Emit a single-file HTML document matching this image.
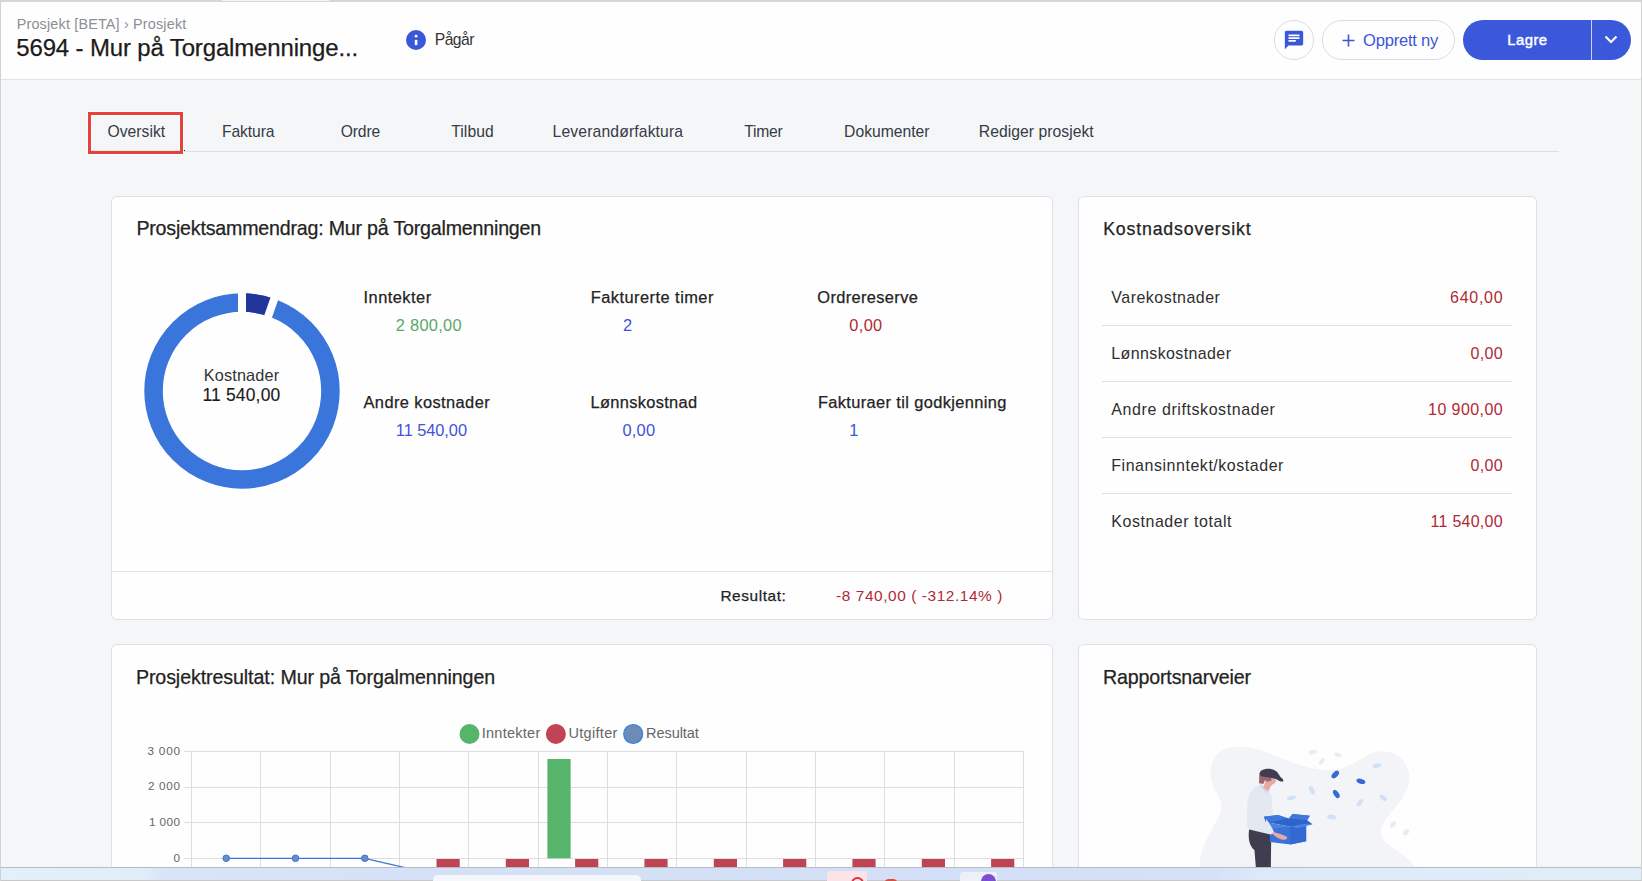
<!DOCTYPE html>
<html><head><meta charset="utf-8">
<style>
*{box-sizing:border-box;margin:0;padding:0}
html,body{width:1642px;height:881px;overflow:hidden}
body{position:relative;background:#f5f6f8;font-family:"Liberation Sans",sans-serif}
.abs{position:absolute}
.bl{display:inline-block;width:0;height:0;vertical-align:baseline}
.t{position:absolute;white-space:nowrap;font-family:"Liberation Sans",sans-serif}
#frameL{left:0;top:0;width:1px;height:881px;background:#d2d2d2}
#frameR{left:1641px;top:0;width:1px;height:881px;background:#d2d2d2}
#frameT{left:0;top:0;width:1642px;height:2px;background:#d6d6d8}
#header{left:1px;top:2px;width:1640px;height:77px;background:#fefefe}
#hborder{left:1px;top:79px;width:1640px;height:1px;background:#dde1e8}
.card{position:absolute;background:#fefefe;border:1px solid #dce1ea;border-radius:6px}
#tabline{left:88px;top:151px;width:1471px;height:1px;background:#dbe0e7}
#tabsel{left:91px;top:150px;width:94px;height:1px;background:#1b2a55}
#redbox{left:88px;top:112px;width:95px;height:42px;border:3px solid #e4423b;box-shadow:0 0 0 1px rgba(250,255,255,0.9),inset 0 0 0 1px rgba(250,255,255,0.9)}
.btn-round{position:absolute;border:1px solid #d8dee8;border-radius:20px;background:#fefefe}
#lagre{left:1463px;top:20px;width:168px;height:40px;background:#3b58db;border-radius:20px}
#lagrediv{left:1591px;top:20px;width:1px;height:40px;background:#c9d3f5}
.divider{position:absolute;left:1102px;width:410px;height:1px;background:#dde1e8}
#taskbar{left:0;top:867px;width:1642px;height:14px;background:linear-gradient(90deg,#e3f0fa 0%,#e1eefa 8.5%,#d8e5f8 10%,#d5e1f6 25%,#d3dff6 60%,#d5e1f6 74%,#dde9f8 76.5%,#e1eef9 100%);border-top:1px solid #b9bcc2;border-bottom:1px solid #c8c8c8}
</style></head><body>
<div class="abs" id="header"></div>
<div class="abs" id="hborder"></div>
<div class="abs" id="frameT"></div>
<div class="abs" style="left:222px;top:0;width:107px;height:1px;background:#f4f4f4"></div>

<!-- info icon -->
<svg class="abs" style="left:406px;top:30px" width="20" height="20" viewBox="0 0 20 20"><circle cx="10" cy="10" r="10" fill="#3b57d9"/><rect x="8.8" y="9.9" width="2.6" height="5.2" fill="#fff"/><rect x="8.8" y="4.9" width="2.6" height="2.4" fill="#fff"/></svg>

<!-- chat button -->
<div class="btn-round" style="left:1274px;top:20px;width:40px;height:40px;"></div>
<svg class="abs" style="left:1283px;top:29px" width="22" height="22" viewBox="0 0 24 24"><path fill="#3b57d9" d="M20 2H4c-1.1 0-1.99.9-1.99 2L2 22l4-4h14c1.1 0 2-.9 2-2V4c0-1.1-.9-2-2-2zM6 9h12v2H6V9zm8 5H6v-2h8v2zm4-6H6V6h12v2z"/></svg>

<!-- opprett ny -->
<div class="btn-round" style="left:1322px;top:20px;width:133px;height:40px;"></div>
<svg class="abs" style="left:1342px;top:33.5px" width="13" height="13" viewBox="0 0 13 13"><path d="M6.5 0.5v12M0.5 6.5h12" stroke="#3b57d9" stroke-width="1.6"/></svg>

<!-- lagre -->
<div class="abs" id="lagre"></div>
<div class="abs" id="lagrediv"></div>
<svg class="abs" style="left:1603px;top:34px" width="16" height="12" viewBox="0 0 16 12"><path d="M2.5 2.5l5.5 5.5l5.5-5.5" stroke="#fff" stroke-width="2.2" fill="none"/></svg>

<!-- tabs -->
<div class="abs" id="tabline"></div>
<div class="abs" id="tabsel"></div>

<!-- cards -->
<div class="card" style="left:111px;top:196px;width:942px;height:424px"></div>
<div class="abs" style="left:112px;top:571px;width:940px;height:1px;background:#dfe3ea"></div>
<div class="card" style="left:1078px;top:196px;width:459px;height:424px"></div>
<div class="card" style="left:111px;top:644px;width:942px;height:260px"></div>
<div class="card" style="left:1078px;top:644px;width:459px;height:260px"></div>

<div class="divider" style="top:325px"></div>
<div class="divider" style="top:381px"></div>
<div class="divider" style="top:437px"></div>
<div class="divider" style="top:493px"></div>

<!-- donut -->
<svg class="abs" style="left:141.65px;top:291.1px" width="200" height="200" viewBox="0 0 200 200">
<circle cx="100" cy="100" r="88.45" fill="none" stroke="#3a75dc" stroke-width="18.5"/>
<path d="M100 11.55 A88.45 88.45 0 0 1 129.23 16.52" fill="none" stroke="#23349c" stroke-width="18.5"/>
<path d="M96 0 H104 V40 H96 Z" fill="#fefefe"/>
<g transform="rotate(19.3 100 100)"><path d="M96 0 H104 V40 H96 Z" fill="#fefefe"/></g>
</svg>

<svg class="abs" style="left:0;top:0" width="1642" height="881" viewBox="0 0 1642 881">
<g stroke="#dedede" stroke-width="1" shape-rendering="crispEdges"><line x1="191.5" y1="751" x2="191.5" y2="881" /><line x1="260.8" y1="751" x2="260.8" y2="881" /><line x1="330.2" y1="751" x2="330.2" y2="881" /><line x1="399.5" y1="751" x2="399.5" y2="881" /><line x1="468.8" y1="751" x2="468.8" y2="881" /><line x1="538.1" y1="751" x2="538.1" y2="881" /><line x1="607.5" y1="751" x2="607.5" y2="881" /><line x1="676.8" y1="751" x2="676.8" y2="881" /><line x1="746.1" y1="751" x2="746.1" y2="881" /><line x1="815.5" y1="751" x2="815.5" y2="881" /><line x1="884.8" y1="751" x2="884.8" y2="881" /><line x1="954.1" y1="751" x2="954.1" y2="881" /><line x1="1023.5" y1="751" x2="1023.5" y2="881" /><line x1="184" y1="751.4" x2="1023.5" y2="751.4" /><line x1="184" y1="787.0" x2="1023.5" y2="787.0" /><line x1="184" y1="822.7" x2="1023.5" y2="822.7" /><line x1="184" y1="858.3" x2="1023.5" y2="858.3" /></g>
<rect x="436.5" y="859" width="23.2" height="30" fill="#bf4453"/><rect x="505.8" y="859" width="23.2" height="30" fill="#bf4453"/><rect x="575.1" y="859" width="23.2" height="30" fill="#bf4453"/><rect x="644.4" y="859" width="23.2" height="30" fill="#bf4453"/><rect x="713.8" y="859" width="23.2" height="30" fill="#bf4453"/><rect x="783.1" y="859" width="23.2" height="30" fill="#bf4453"/><rect x="852.4" y="859" width="23.2" height="30" fill="#bf4453"/><rect x="921.8" y="859" width="23.2" height="30" fill="#bf4453"/><rect x="991.1" y="859" width="23.2" height="30" fill="#bf4453"/><rect x="547.4" y="759" width="23.2" height="99.3" fill="#57b46b"/><polyline points="226.2,858.3 364.8,858.3 434.2,874.4" fill="none" stroke="#3d76da" stroke-width="1.3"/><circle cx="226.2" cy="858.3" r="3.3" fill="#6b8cc0" stroke="#3d76da" stroke-width="1"/><circle cx="295.5" cy="858.3" r="3.3" fill="#6b8cc0" stroke="#3d76da" stroke-width="1"/><circle cx="364.8" cy="858.3" r="3.3" fill="#6b8cc0" stroke="#3d76da" stroke-width="1"/>
<circle cx="469.5" cy="734" r="10" fill="#57b46b"/>
<circle cx="555.9" cy="734" r="10" fill="#c04455"/>
<circle cx="633.2" cy="734" r="9.5" fill="#6b8cb8" stroke="#3d7ee0" stroke-width="1.2"/>
</svg>

<!-- illustration -->
<svg class="abs" style="left:1190px;top:735px" width="240" height="135" viewBox="0 0 1566 881">
<path d="M60 881 C 60 760 120 650 175 560 C 230 470 200 420 160 350 C 110 260 130 150 210 100 C 290 60 390 70 520 120 C 650 170 780 230 900 230 C 1000 230 1080 180 1160 130 C 1260 80 1380 110 1420 220 C 1460 330 1380 430 1300 520 C 1220 610 1230 680 1330 740 C 1410 790 1460 830 1470 881 Z" fill="#f3f4f7"/>
<g fill="#eaecf1">
<ellipse cx="800" cy="112" rx="28" ry="14" transform="rotate(-15 800 112)"/>
<ellipse cx="965" cy="130" rx="25" ry="13" transform="rotate(20 965 130)"/>
<ellipse cx="860" cy="172" rx="14" ry="26" transform="rotate(35 860 172)"/>
<ellipse cx="1325" cy="585" rx="16" ry="24" transform="rotate(40 1325 585)"/>
<ellipse cx="1410" cy="635" rx="16" ry="24" transform="rotate(45 1410 635)"/>
</g>
<g fill="#d0e0f7">
<ellipse cx="1220" cy="200" rx="30" ry="15" transform="rotate(-10 1220 200)"/>
<ellipse cx="795" cy="360" rx="15" ry="30" transform="rotate(-30 795 360)"/>
<ellipse cx="662" cy="410" rx="30" ry="14" transform="rotate(-10 662 410)"/>
<ellipse cx="1260" cy="410" rx="15" ry="28" transform="rotate(-50 1260 410)"/>
<ellipse cx="1108" cy="442" rx="14" ry="28" transform="rotate(35 1108 442)"/>
<ellipse cx="925" cy="535" rx="30" ry="15" transform="rotate(10 925 535)"/>
</g>
<g fill="#3569d4">
<ellipse cx="948" cy="258" rx="17" ry="30" transform="rotate(45 948 258)"/>
<ellipse cx="1115" cy="302" rx="30" ry="16" transform="rotate(15 1115 302)"/>
<ellipse cx="955" cy="385" rx="16" ry="30" transform="rotate(-35 955 385)"/>
</g>
<!-- person -->
</svg>
<svg class="abs" style="left:1240px;top:760px" width="80" height="108" viewBox="0 0 653 881">
<path d="M75 560 L255 585 L252 881 L130 881 L118 735 C82 705 62 650 75 560 Z" fill="#3f3d4f"/>
<path d="M68 305 C85 250 130 215 172 198 L232 248 L258 295 L268 450 L262 560 L278 598 L240 605 L75 568 L58 545 C52 450 55 360 68 305 Z" fill="#e3e8f1"/>
<path d="M172 198 L232 248 L225 275 L160 215 Z" fill="#d3d9e6"/>
<path d="M198 130 L292 148 C298 172 290 195 268 198 L248 218 L234 252 L190 228 L205 178 Z" fill="#e8a9a6"/>
<path d="M158 108 L252 128 L258 168 L222 178 L205 160 L190 196 L155 190 Z" fill="#9b6470"/>
<path d="M160 108 C168 72 250 55 302 95 L332 140 C348 150 358 162 352 176 C330 178 310 165 290 152 L170 132 Z" fill="#3f3d4f"/>
<path d="M195 462 L312 448 L400 478 L430 440 L570 455 L548 492 L592 525 L410 545 L210 505 Z" fill="#2f63cc"/>
<path d="M245 528 L410 545 L540 522 L540 662 L410 690 L245 670 Z" fill="#3a72d8"/>
<path d="M410 545 L540 522 L540 662 L410 690 Z" fill="#336ad2"/>
<path d="M195 462 L312 448 L382 480 L250 505 Z" fill="#3f78dc"/>
<path d="M398 478 L430 440 L570 455 L548 492 Z" fill="#3f78dc"/>
<path d="M210 505 L410 545 L262 560 Z" fill="#4a82e2"/>
<path d="M420 540 L545 518 L592 525 L468 556 Z" fill="#4a82e2"/>
<path d="M215 480 L262 555 L282 598 L246 608 L205 565 Z" fill="#e3e8f1"/>
<path d="M268 585 C300 595 345 605 380 625 C392 640 380 655 350 650 C320 648 290 625 270 608 Z" fill="#e8a9a6"/>
</svg>

<!-- taskbar -->
<div class="abs" id="taskbar"></div>
<div class="abs" style="left:433px;top:875px;width:208px;height:10px;background:#f6f7fa;border-radius:6px"></div>
<div class="abs" style="left:827px;top:871px;width:40px;height:12px;background:#fbe3e7;border-radius:3px"></div>
<div class="abs" style="left:851px;top:877px;width:13px;height:13px;border:2.5px solid #d8323c;border-radius:7px"></div>
<div class="abs" style="left:884px;top:879px;width:14px;height:10px;background:#e04a3a;border-radius:7px"></div>
<div class="abs" style="left:960px;top:872px;width:37px;height:12px;background:#eef0f6;border-radius:3px"></div>
<div class="abs" style="left:981px;top:874px;width:15px;height:15px;background:#7b4fcf;border-radius:8px"></div>

<span class="t" id="t0" style="left:16.70px;top:16.90px;font-size:14.39px;line-height:14.39px;letter-spacing:0.180px;color:#8b8f96;font-weight:400;">Prosjekt [BETA] › Prosjekt<i class="bl"></i></span>
<span class="t" id="t1" style="left:16.30px;top:36.31px;font-size:23.98px;line-height:23.98px;letter-spacing:-0.138px;color:#1c1c1c;font-weight:400;-webkit-text-stroke:0.25px #1c1c1c;">5694 - Mur på Torgalmenninge...<i class="bl"></i></span>
<span class="t" id="t2" style="left:434.80px;top:31.90px;font-size:15.70px;line-height:15.70px;letter-spacing:-0.575px;color:#333333;font-weight:400;">Pågår<i class="bl"></i></span>
<span class="t" id="t3" style="left:1363.10px;top:32.50px;font-size:16.57px;line-height:16.57px;letter-spacing:-0.228px;color:#3b57d9;font-weight:400;">Opprett ny<i class="bl"></i></span>
<span class="t" id="t4" style="left:1507.30px;top:33.30px;font-size:14.83px;line-height:14.83px;letter-spacing:0.475px;color:#ffffff;font-weight:400;-webkit-text-stroke:0.45px #ffffff;">Lagre<i class="bl"></i></span>
<span class="t" id="t5" style="left:107.40px;top:124.01px;font-size:15.70px;line-height:15.70px;letter-spacing:0.036px;color:#363b45;font-weight:400;">Oversikt<i class="bl"></i></span>
<span class="t" id="t6" style="left:221.90px;top:124.01px;font-size:15.70px;line-height:15.70px;letter-spacing:-0.092px;color:#363b45;font-weight:400;">Faktura<i class="bl"></i></span>
<span class="t" id="t7" style="left:340.70px;top:124.01px;font-size:15.70px;line-height:15.70px;letter-spacing:-0.137px;color:#363b45;font-weight:400;">Ordre<i class="bl"></i></span>
<span class="t" id="t8" style="left:451.20px;top:124.01px;font-size:15.70px;line-height:15.70px;letter-spacing:0.080px;color:#363b45;font-weight:400;">Tilbud<i class="bl"></i></span>
<span class="t" id="t9" style="left:552.60px;top:124.01px;font-size:15.70px;line-height:15.70px;letter-spacing:0.144px;color:#363b45;font-weight:400;">Leverandørfaktura<i class="bl"></i></span>
<span class="t" id="t10" style="left:744.30px;top:124.01px;font-size:15.70px;line-height:15.70px;letter-spacing:-0.262px;color:#363b45;font-weight:400;">Timer<i class="bl"></i></span>
<span class="t" id="t11" style="left:844.10px;top:124.01px;font-size:15.70px;line-height:15.70px;letter-spacing:-0.011px;color:#363b45;font-weight:400;">Dokumenter<i class="bl"></i></span>
<span class="t" id="t12" style="left:978.80px;top:124.01px;font-size:15.70px;line-height:15.70px;letter-spacing:0.047px;color:#363b45;font-weight:400;">Rediger prosjekt<i class="bl"></i></span>
<span class="t" id="t13" style="left:136.40px;top:219.01px;font-size:19.62px;line-height:19.62px;letter-spacing:-0.194px;color:#232323;font-weight:400;-webkit-text-stroke:0.25px #232323;">Prosjektsammendrag: Mur på Torgalmenningen<i class="bl"></i></span>
<span class="t" id="t14" style="left:203.70px;top:366.60px;font-size:16.28px;line-height:16.28px;letter-spacing:0.162px;color:#333333;font-weight:400;">Kostnader<i class="bl"></i></span>
<span class="t" id="t15" style="left:202.40px;top:387.10px;font-size:17.44px;line-height:17.44px;letter-spacing:0.194px;color:#1a1a1a;font-weight:400;-webkit-text-stroke:0.12px #1a1a1a;">11 540,00<i class="bl"></i></span>
<span class="t" id="t16" style="left:363.50px;top:288.91px;font-size:16.42px;line-height:16.42px;letter-spacing:0.475px;color:#232323;font-weight:400;-webkit-text-stroke:0.25px #232323;">Inntekter<i class="bl"></i></span>
<span class="t" id="t17" style="left:590.70px;top:288.91px;font-size:16.42px;line-height:16.42px;letter-spacing:0.463px;color:#232323;font-weight:400;-webkit-text-stroke:0.25px #232323;">Fakturerte timer<i class="bl"></i></span>
<span class="t" id="t18" style="left:817.30px;top:288.91px;font-size:16.42px;line-height:16.42px;letter-spacing:0.355px;color:#232323;font-weight:400;-webkit-text-stroke:0.25px #232323;">Ordrereserve<i class="bl"></i></span>
<span class="t" id="t19" style="left:363.50px;top:393.91px;font-size:16.42px;line-height:16.42px;letter-spacing:0.411px;color:#232323;font-weight:400;-webkit-text-stroke:0.25px #232323;">Andre kostnader<i class="bl"></i></span>
<span class="t" id="t20" style="left:590.50px;top:393.91px;font-size:16.42px;line-height:16.42px;letter-spacing:0.318px;color:#232323;font-weight:400;-webkit-text-stroke:0.25px #232323;">Lønnskostnad<i class="bl"></i></span>
<span class="t" id="t21" style="left:817.90px;top:393.91px;font-size:16.42px;line-height:16.42px;letter-spacing:0.367px;color:#232323;font-weight:400;-webkit-text-stroke:0.25px #232323;">Fakturaer til godkjenning<i class="bl"></i></span>
<span class="t" id="t22" style="left:395.80px;top:316.52px;font-size:16.42px;line-height:16.42px;letter-spacing:0.279px;color:#5aa867;font-weight:400;">2 800,00<i class="bl"></i></span>
<span class="t" id="t23" style="left:622.90px;top:316.52px;font-size:16.42px;line-height:16.42px;letter-spacing:0.000px;color:#4452d8;font-weight:400;">2<i class="bl"></i></span>
<span class="t" id="t24" style="left:849.30px;top:316.52px;font-size:16.42px;line-height:16.42px;letter-spacing:0.333px;color:#b02a35;font-weight:400;">0,00<i class="bl"></i></span>
<span class="t" id="t25" style="left:395.80px;top:421.52px;font-size:16.42px;line-height:16.42px;letter-spacing:-0.069px;color:#4452d8;font-weight:400;">11 540,00<i class="bl"></i></span>
<span class="t" id="t26" style="left:622.40px;top:421.52px;font-size:16.42px;line-height:16.42px;letter-spacing:0.233px;color:#4452d8;font-weight:400;">0,00<i class="bl"></i></span>
<span class="t" id="t27" style="left:849.20px;top:421.52px;font-size:16.42px;line-height:16.42px;letter-spacing:0.000px;color:#4452d8;font-weight:400;">1<i class="bl"></i></span>
<span class="t" id="t28" style="left:720.40px;top:587.61px;font-size:15.41px;line-height:15.41px;letter-spacing:0.581px;color:#232323;font-weight:400;-webkit-text-stroke:0.25px #232323;">Resultat:<i class="bl"></i></span>
<span class="t" id="t29" style="left:836.10px;top:587.61px;font-size:15.41px;line-height:15.41px;letter-spacing:0.576px;color:#b02a35;font-weight:400;">-8 740,00 ( -312.14% )<i class="bl"></i></span>
<span class="t" id="t30" style="left:1103.20px;top:220.91px;font-size:17.73px;line-height:17.73px;letter-spacing:0.837px;color:#232323;font-weight:400;-webkit-text-stroke:0.25px #232323;">Kostnadsoversikt<i class="bl"></i></span>
<span class="t" id="t31" style="left:1111.30px;top:290.01px;font-size:15.99px;line-height:15.99px;letter-spacing:0.483px;color:#2e2e2e;font-weight:400;">Varekostnader<i class="bl"></i></span>
<span class="t" id="t32" style="left:1450.10px;top:290.01px;font-size:15.99px;line-height:15.99px;letter-spacing:0.730px;color:#b02a35;font-weight:400;">640,00<i class="bl"></i></span>
<span class="t" id="t33" style="left:1111.30px;top:346.01px;font-size:15.99px;line-height:15.99px;letter-spacing:0.388px;color:#2e2e2e;font-weight:400;">Lønnskostnader<i class="bl"></i></span>
<span class="t" id="t34" style="left:1470.60px;top:346.01px;font-size:15.99px;line-height:15.99px;letter-spacing:0.317px;color:#b02a35;font-weight:400;">0,00<i class="bl"></i></span>
<span class="t" id="t35" style="left:1111.30px;top:402.01px;font-size:15.99px;line-height:15.99px;letter-spacing:0.585px;color:#2e2e2e;font-weight:400;">Andre driftskostnader<i class="bl"></i></span>
<span class="t" id="t36" style="left:1428.10px;top:402.01px;font-size:15.99px;line-height:15.99px;letter-spacing:0.425px;color:#b02a35;font-weight:400;">10 900,00<i class="bl"></i></span>
<span class="t" id="t37" style="left:1111.30px;top:458.01px;font-size:15.99px;line-height:15.99px;letter-spacing:0.538px;color:#2e2e2e;font-weight:400;">Finansinntekt/kostader<i class="bl"></i></span>
<span class="t" id="t38" style="left:1470.60px;top:458.01px;font-size:15.99px;line-height:15.99px;letter-spacing:0.317px;color:#b02a35;font-weight:400;">0,00<i class="bl"></i></span>
<span class="t" id="t39" style="left:1111.30px;top:514.01px;font-size:15.99px;line-height:15.99px;letter-spacing:0.550px;color:#2e2e2e;font-weight:400;">Kostnader totalt<i class="bl"></i></span>
<span class="t" id="t40" style="left:1430.60px;top:514.01px;font-size:15.99px;line-height:15.99px;letter-spacing:0.262px;color:#b02a35;font-weight:400;">11 540,00<i class="bl"></i></span>
<span class="t" id="t41" style="left:135.90px;top:667.51px;font-size:19.62px;line-height:19.62px;letter-spacing:-0.086px;color:#232323;font-weight:400;-webkit-text-stroke:0.25px #232323;">Prosjektresultat: Mur på Torgalmenningen<i class="bl"></i></span>
<span class="t" id="t42" style="left:1103.00px;top:667.51px;font-size:19.62px;line-height:19.62px;letter-spacing:-0.157px;color:#232323;font-weight:400;-webkit-text-stroke:0.25px #232323;">Rapportsnarveier<i class="bl"></i></span>
<span class="t" id="t43" style="left:481.70px;top:726.01px;font-size:14.54px;line-height:14.54px;letter-spacing:0.250px;color:#666666;font-weight:400;">Inntekter<i class="bl"></i></span>
<span class="t" id="t44" style="left:568.40px;top:726.01px;font-size:14.54px;line-height:14.54px;letter-spacing:0.314px;color:#666666;font-weight:400;">Utgifter<i class="bl"></i></span>
<span class="t" id="t45" style="left:646.00px;top:726.01px;font-size:14.54px;line-height:14.54px;letter-spacing:-0.057px;color:#666666;font-weight:400;">Resultat<i class="bl"></i></span>
<span class="t" id="t46" style="left:147.50px;top:744.71px;font-size:11.77px;line-height:11.77px;letter-spacing:0.775px;color:#666666;font-weight:400;">3 000<i class="bl"></i></span>
<span class="t" id="t47" style="left:148.00px;top:780.33px;font-size:11.77px;line-height:11.77px;letter-spacing:0.650px;color:#666666;font-weight:400;">2 000<i class="bl"></i></span>
<span class="t" id="t48" style="left:149.00px;top:815.97px;font-size:11.77px;line-height:11.77px;letter-spacing:0.400px;color:#666666;font-weight:400;">1 000<i class="bl"></i></span>
<span class="t" id="t49" style="left:173.45px;top:851.60px;font-size:11.77px;line-height:11.77px;letter-spacing:0.000px;color:#666666;font-weight:400;">0<i class="bl"></i></span>

<div class="abs" id="redbox"></div>
<div class="abs" id="frameL"></div>
<div class="abs" id="frameR"></div>
</body></html>
